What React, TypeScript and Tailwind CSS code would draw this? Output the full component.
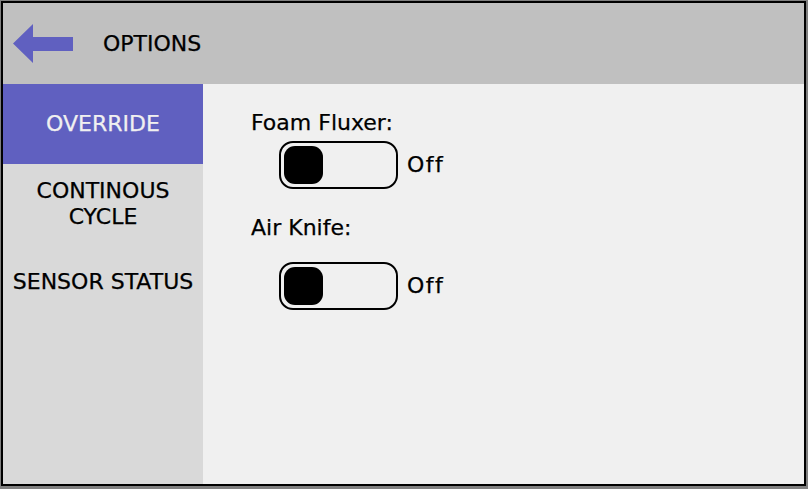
import React from "react";

function Toggle() {
  return (
    <div className="flex items-center gap-[9px]">
      <div className="w-[119px] h-[48px] border-2 border-black rounded-[14px] pl-[3px] flex items-center">
        <div className="w-[39px] h-[38px] bg-black rounded-[11px]" />
      </div>
      <span className="tracking-[1.5px]">Off</span>
    </div>
  );
}

export default function App() {
  return (
    <div
      className="w-[808px] h-[489px] bg-[#808080] pl-[1px] pt-[1px] text-[22px] leading-[24px] text-black [-webkit-text-stroke:0.25px_currentColor]"
      style={{ fontFamily: '"DejaVu Sans", sans-serif' }}
    >
      <div className="w-[805px] h-[485px] border-2 border-black flex flex-col">
        {/* Header */}
        <div className="h-[81px] bg-[#c0c0c0] flex items-center pl-[10px]">
          <svg width="60" height="40" viewBox="0 0 60 40">
            <polygon points="0,19.5 20,0 20,13 60,13 60,27 20,27 20,39" fill="#6060c0" />
          </svg>
          <span className="ml-[30px]">OPTIONS</span>
        </div>

        <div className="flex-1 flex">
          {/* Sidebar */}
          <div className="w-[200px] bg-[#d9d9d9] flex flex-col">
            <div className="h-[80px] bg-[#6060c0] text-[#f0f0f0] flex items-center justify-center">OVERRIDE</div>
            <div className="h-[80px] flex items-center justify-center text-center leading-[26px]">
              CONTINOUS
              <br />
              CYCLE
            </div>
            <div className="h-[76px] flex items-center justify-center">SENSOR STATUS</div>
          </div>

          {/* Content */}
          <div className="flex-1 bg-[#f0f0f0] pl-[48px] pt-[27px] flex flex-col items-start">
            <span>Foam Fluxer:</span>
            <div className="mt-[6px] ml-[28px]">
              <Toggle />
            </div>
            <span className="mt-[27px]">Air Knife:</span>
            <div className="mt-[22px] ml-[28px]">
              <Toggle />
            </div>
          </div>
        </div>
      </div>
    </div>
  );
}
